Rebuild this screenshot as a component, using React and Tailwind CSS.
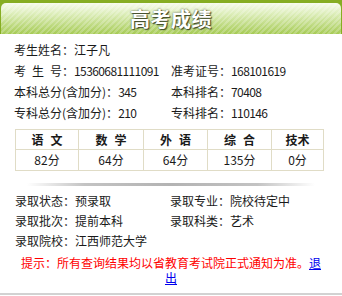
import React from 'react'

const scores = [
  { subject: ['语', '文'], score: '82分', width: 'w-[63px]' },
  { subject: ['数', '学'], score: '64分', width: 'w-[65px]' },
  { subject: ['外', '语'], score: '64分', width: 'w-[64px]' },
  { subject: ['综', '合'], score: '135分', width: 'w-[64px]' },
  { subject: ['技术'], score: '0分', width: 'w-[52px]' },
]

const Num = ({ children }) => <span className="tracking-[-0.6px]">{children}</span>

const Row = ({ children, className = '' }) => (
  <div className={`h-[21px] flex items-center whitespace-nowrap ${className}`}>{children}</div>
)

const Field = ({ label, value }) => (
  <div className="h-5 flex items-center whitespace-nowrap">
    {label}：{value}
  </div>
)

export default function App() {
  return (
    <div className="w-[342px] h-[296px] overflow-hidden bg-white flex flex-col font-['Noto_Sans_CJK_SC',sans-serif] text-[12px] text-[#1a1a1a]">
      <div className="h-[34px] shrink-0 bg-[#86ad22] pt-[3px] px-px">
        <div className="h-full rounded-t-[5px] flex items-center justify-center bg-[image:repeating-linear-gradient(-45deg,rgba(255,255,255,0.22)_0_2px,transparent_2px_4px),linear-gradient(#f7fbec,#dcedb8_35%,#a6cb55)]">
          <span className="text-[20px] font-bold leading-none text-white tracking-[0.5px] [text-shadow:0_0_2px_#46512e,1px_1px_1px_#3a4424]">
            高考成绩
          </span>
        </div>
      </div>

      <div className="pl-[14px] pt-[5px]">
        <Row>考生姓名：江子凡</Row>
        <div className="grid grid-cols-[157px_1fr]">
          <Row>
            <span className="w-[48px] flex justify-between">
              <span>考</span>
              <span>生</span>
              <span>号</span>
            </span>
            ：<Num>15360681111091</Num>
          </Row>
          <Row>准考证号：<Num>168101619</Num></Row>
          <Row>本科总分(含加分)：<Num>345</Num></Row>
          <Row>本科排名：<Num>70408</Num></Row>
          <Row>专科总分(含加分)：<Num>210</Num></Row>
          <Row>专科排名：<Num>110146</Num></Row>
        </div>
      </div>

      <table className="mt-[6px] ml-[15px] w-[308px] table-fixed border-collapse">
        <thead>
          <tr>
            {scores.map((s) => (
              <th key={s.score + s.width} className={`${s.width} h-[20px] p-0 border border-[#e0dcc6] font-bold text-center`}>
                <span className="inline-flex gap-[7px]">
                  {s.subject.map((c) => (
                    <span key={c}>{c}</span>
                  ))}
                </span>
              </th>
            ))}
          </tr>
        </thead>
        <tbody>
          <tr>
            {scores.map((s) => (
              <td key={s.score + s.width} className="h-[21px] p-0 border border-[#e0dcc6] text-center">
                {s.score}
              </td>
            ))}
          </tr>
        </tbody>
      </table>

      <div className="mt-[12px] ml-[27px] w-[288px] h-[3px] bg-[linear-gradient(90deg,transparent,#b4b4b4_20%,#a0a0a0_50%,#b4b4b4_80%,transparent)] opacity-80" />

      <div className="mt-[5px] pl-[15px] grid grid-cols-[155px_1fr]">
        <Field label="录取状态" value="预录取" />
        <Field label="录取专业" value="院校待定中" />
        <Field label="录取批次" value="提前本科" />
        <Field label="录取科类" value="艺术" />
        <Field label="录取院校" value="江西师范大学" />
      </div>

      <p className="mt-[4px] mx-auto w-[304px] text-center leading-[15px] text-[#ff0000]">
        提示：所有查询结果均以省教育考试院正式通知为准。
        <a href="#" className="text-[#0000ee] underline">退出</a>
      </p>

      <div className="mt-auto mb-px h-[2px] bg-[#d2d2d2]" />
    </div>
  )
}
